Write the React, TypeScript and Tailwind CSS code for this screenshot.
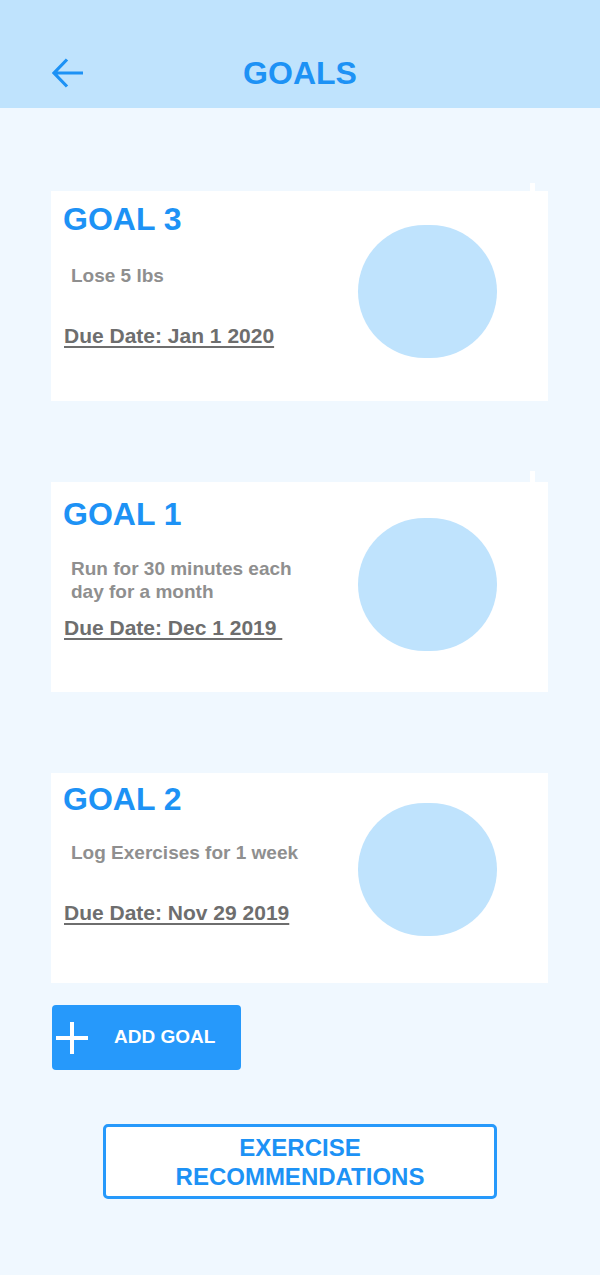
import React from 'react';

type Goal = {
  title: string;
  text: string;
  due: string;
  notch?: string;
  // small per-card vertical tweaks, the mock is not perfectly aligned
  titlePad: string;
  textGap: string;
  dueGap: string;
  circleGap: string;
};

const goals: Goal[] = [
  {
    title: 'GOAL 3',
    text: 'Lose 5 lbs',
    due: 'Due Date: Jan 1 2020',
    notch: 'h-[8px] -top-[8px]',
    titlePad: 'pt-[10px]',
    textGap: 'mt-[27px]',
    dueGap: 'mt-[14px]',
    circleGap: 'mt-[34px]',
  },
  {
    title: 'GOAL 1',
    text: 'Run for 30 minutes each day for a month',
    due: 'Due Date: Dec 1 2019\u00a0',
    notch: 'h-[11px] -top-[11px]',
    titlePad: 'pt-[14px]',
    textGap: 'mt-[25px]',
    dueGap: 'mt-[13px]',
    circleGap: 'mt-[36px]',
  },
  {
    title: 'GOAL 2',
    text: 'Log Exercises for 1 week',
    due: 'Due Date: Nov 29 2019',
    titlePad: 'pt-[8px]',
    textGap: 'mt-[24px]',
    dueGap: 'mt-[14px]',
    circleGap: 'mt-[30px]',
  },
];

const GoalCard: React.FC<{ goal: Goal }> = ({ goal }) => (
  <div className="relative ml-[51px] flex h-[210px] w-[497px] justify-between bg-white">
    {goal.notch && <div className={`absolute right-[13px] w-[5px] bg-white ${goal.notch}`} />}
    <div className={`pl-[12px] ${goal.titlePad}`}>
      <h2 className="text-[32px] font-bold leading-[36px] text-[#1d92f5]">{goal.title}</h2>
      <p className={`h-[46px] w-[240px] pl-[8px] text-[19px] font-bold leading-[23px] text-[#8f8f8f] ${goal.textGap}`}>
        {goal.text}
      </p>
      <p
        className={`pl-[1px] text-[21px] font-bold leading-[24px] text-[#6e6e6e] underline decoration-2 underline-offset-[3px] ${goal.dueGap}`}
      >
        {goal.due}
      </p>
    </div>
    <div className={`mr-[51px] h-[133px] w-[139px] rounded-full bg-[#bfe3fd] ${goal.circleGap}`} />
  </div>
);

const App: React.FC = () => {
  return (
    <div className="min-h-[1275px] w-[600px] bg-[#f0f8ff] font-['Liberation_Sans',Arial,sans-serif]">
      {/* Header */}
      <header className="h-[108px] bg-[#bfe3fd] pt-[55px]">
        <div className="grid h-[36px] grid-cols-[1fr_auto_1fr] items-center">
          <button className="ml-[52px] flex h-[30px] w-[32px] items-center">
            <svg width="32" height="30" viewBox="0 0 32 30" fill="none">
              <path d="M15 1.5 L2 15 L15 28.5 M2 15 H31" stroke="#1d92f5" strokeWidth="3.2" />
            </svg>
          </button>
          <h1 className="text-[32px] font-bold leading-[36px] text-[#1d92f5]">GOALS</h1>
          <div />
        </div>
      </header>

      {/* Goals */}
      <div className="flex flex-col gap-[81px] pt-[83px]">
        {goals.map((g) => (
          <GoalCard key={g.title} goal={g} />
        ))}
      </div>

      <button className="ml-[52px] mt-[22px] flex h-[65px] w-[189px] items-center gap-[26px] rounded-[4px] bg-[#2699fb] pl-[4px]">
        <svg width="32" height="32" viewBox="0 0 32 32">
          <path d="M16 0 V32 M0 16 H32" stroke="white" strokeWidth="4" />
        </svg>
        <span className="text-[19px] font-bold text-white">ADD GOAL</span>
      </button>

      <div className="mt-[54px] flex justify-center">
        <button className="flex h-[75px] w-[394px] items-center justify-center rounded-[5px] border-[3px] border-[#2699fb] bg-white">
          <span className="text-center text-[24px] font-bold leading-[29px] text-[#1d92f5]">
            EXERCISE
            <br />
            RECOMMENDATIONS
          </span>
        </button>
      </div>
    </div>
  );
};

export default App;
